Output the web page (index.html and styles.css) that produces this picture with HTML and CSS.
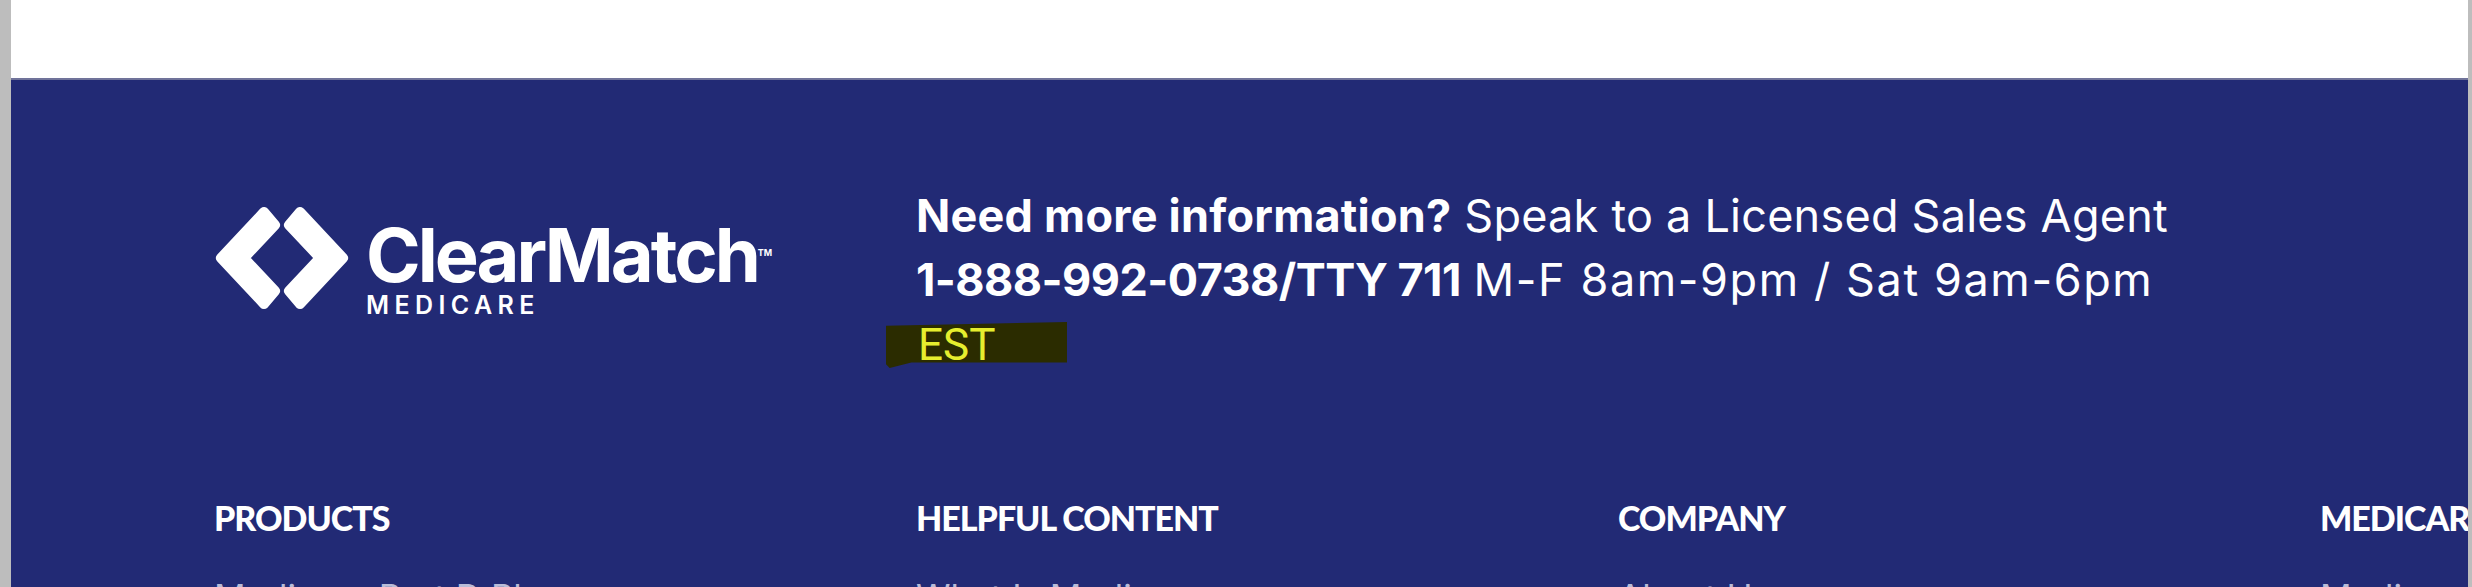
FILE: index.html
```html
<!DOCTYPE html>
<html lang="en">
<head>
    <meta charset="UTF-8">
    <meta name="viewport" content="width=device-width, initial-scale=1.0">
    <title>ClearMatch Medicare</title>
    <link rel="stylesheet" href="styles.css">
</head>
<body>

<div class="page">
    <div class="top"></div>
    <footer class="footer">
        <div class="contact">
            <div class="logo">
                <svg class="logo-icon" viewBox="0 0 136 106" width="136" height="106">
                    <path d="M50 7 L7 53 L50 99 L61 86 L30 53 L61 20 Z" fill="#fff" stroke="#fff" stroke-width="10" stroke-linejoin="round"/>
                    <path d="M86 7 L129 53 L86 99 L75 86 L106 53 L75 20 Z" fill="#fff" stroke="#fff" stroke-width="10" stroke-linejoin="round"/>
                </svg>
                <div class="logo-text">
                    <div class="logo-name">ClearMatch<span class="tm">TM</span></div>
                    <div class="logo-sub">MEDICARE</div>
                </div>
            </div>
            <div class="info">
                <div class="info-line"><b>Need more information?</b> Speak to a Licensed Sales Agent</div>
                <div><b class="phone">1-888-992-0738/TTY 711</b> <span class="hours">M-F 8am-9pm / Sat 9am-6pm</span></div>
                <div><span class="est">EST</span></div>
            </div>
        </div>
        <div class="links">
            <div class="col">
                <div class="col-title">PRODUCTS</div>
                <div class="col-link">Medicare Part D Plans</div>
            </div>
            <div class="col">
                <div class="col-title">HELPFUL CONTENT</div>
                <div class="col-link">What Is Medicare</div>
            </div>
            <div class="col">
                <div class="col-title">COMPANY</div>
                <div class="col-link">About Us</div>
            </div>
            <div class="col">
                <div class="col-title">MEDICARE</div>
                <div class="col-link">Medicare</div>
            </div>
        </div>
    </footer>
</div>

</body>
</html>
```

FILE: styles.css
```css
html, body {
    margin: 0;
    height: 587px;
    overflow: hidden;
    background-color: #bdbdbd;
}
.page {
    margin-left: 11px;
    width: 2457px;
    height: 587px;
    overflow: hidden;
    background-color: #fff;
}
.top {
    height: 78px;
}
.footer {
    height: 509px;
    padding-left: 203px;
    box-sizing: border-box;
    border-top: 2px solid #70739a;
    background-color: #222a75;
    color: #fff;
    font-family: Inter, "Liberation Sans", sans-serif;
}
.contact {
    display: flex;
    padding-top: 104px;
    height: 420px;
    box-sizing: border-box;
}
.logo {
    display: flex;
    align-items: flex-start;
    width: 702px;
    padding-top: 21px;
}
.logo-icon {
    flex: none;
}
.logo-text {
    margin: 15px 0 0 16px;
}
.logo-name {
    font-size: 74px;
    font-weight: 700;
    line-height: 66px;
    letter-spacing: -3px;
    white-space: nowrap;
}
.tm {
    font-size: 9px;
    vertical-align: 26px;
    letter-spacing: 0;
}
.logo-sub {
    margin-top: 5px;
    font-size: 25px;
    font-weight: 600;
    line-height: 24px;
    letter-spacing: 5.4px;
}
.info {
    font-size: 45px;
    line-height: 64px;
    white-space: nowrap;
}
.info-line {
    letter-spacing: 0.23px;
}
.phone {
    letter-spacing: -0.55px;
}
.hours {
    letter-spacing: 1.6px;
}
.est {
    display: inline-block;
    margin-left: -30px;
    padding: 0 72px 0 32px;
    background-color: #2b2c00;
    color: #e6ee2e;
    font-family: Roboto, sans-serif;
    font-size: 44px;
    line-height: 46px;
    clip-path: polygon(0 8%, 100% 0, 100% 88%, 14% 88%, 2% 100%, 0 92%);
}
.links {
    display: grid;
    grid-template-columns: repeat(4, 702px);
}
.col-title {
    font-family: Lato, sans-serif;
    font-size: 34px;
    font-weight: 900;
    line-height: 36px;
    letter-spacing: -1px;
    white-space: nowrap;
}
.col-link {
    margin-top: 41px;
    font-size: 35px;
    line-height: 40px;
    color: #b9bcd8;
    white-space: nowrap;
}
```
